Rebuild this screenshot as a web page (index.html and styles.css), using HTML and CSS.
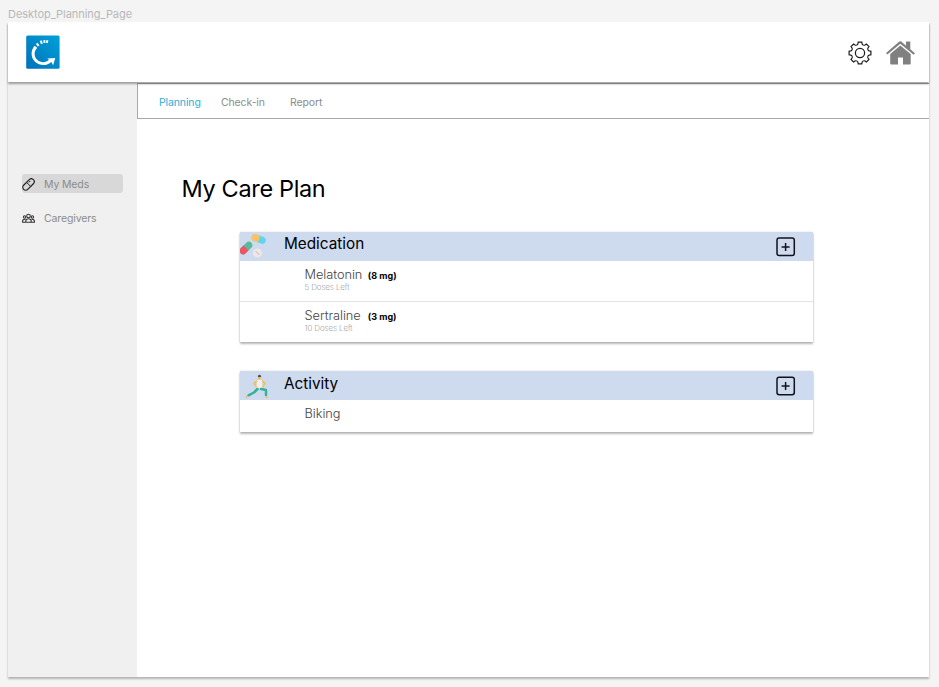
FILE: index.html
```html
<!DOCTYPE html>
<html lang="en">
<head>
<meta charset="utf-8">
<title>My Care Plan</title>
<link rel="stylesheet" href="styles.css">
</head>
<body>
<div class="label">Desktop_Planning_Page</div>
<div class="frame">
  <header class="header">
    <svg class="logo" viewBox="0 0 34 34">
      <defs><linearGradient id="blue" x1="1" y1="0" x2="0" y2="1"><stop offset="0" stop-color="#00a1d9"/><stop offset="1" stop-color="#0071b9"/></linearGradient></defs>
      <rect x=".2" y=".4" width="33.400" height="33.400" rx="1.500" fill="url(#blue)"/>
      <path d="M8.600 10.700C4.300 15.500 4.700 22.800 9.300 27C14 31.300 21.500 30.800 25.300 26.900L27.100 30.200L29.300 22.900L21.200 23.500L23 24.700C20.300 27.800 14.800 28.100 11.500 25.100C7.800 21.700 7.700 16.200 11.200 12.700Z" fill="#fff"/>
      <path d="M10.700 8.300l2 2.700M14.700 5.700l1.200 3.100M18.300 5.100l.2 2.800M21.500 5.300l-.8 2.600" stroke="#fff" stroke-width="2"/>
    </svg>
    <div class="tools">
      <svg class="gear" viewBox="-12 -12 24 24" fill="none" stroke="#1c1c1c" stroke-width="1.200">
        <defs><path id="tooth" d="M-3.290 -7.950Q-2.300 -8.300 -2.100 -9.200L-1.800 -10.900H1.800L2.100 -9.200Q2.300 -8.300 3.290 -7.950"/></defs>
        <use href="#tooth"/><use href="#tooth" transform="rotate(45)"/><use href="#tooth" transform="rotate(90)"/><use href="#tooth" transform="rotate(135)"/><use href="#tooth" transform="rotate(180)"/><use href="#tooth" transform="rotate(225)"/><use href="#tooth" transform="rotate(270)"/><use href="#tooth" transform="rotate(315)"/>
        <circle r="4.600"/>
      </svg>
      <svg class="home" viewBox="0 0 29 24" fill="#808080">
        <path d="M0 12L13.300 .6Q14.300 -.1 15.300 .6L20 4.700V.5H24.300V8.300L29 12.200L27.600 13.700L14.300 2.700L1.400 13.600Z"/>
        <path d="M4.200 13L14.300 4.500L24.700 13V22.600Q24.700 23.500 23.800 23.500H17V16.500H12V23.500H5.100Q4.200 23.500 4.200 22.600Z"/>
      </svg>
    </div>
  </header>
  <div class="body">
    <nav class="side">
      <a class="side-item active">
        <svg viewBox="0 0 13 13" fill="none" stroke="#222" stroke-width="1.200"><rect x="-.4" y="3.600" width="13.800" height="5.800" rx="2.900" transform="rotate(-45 6.500 6.500)"/><path d="M4.600 4.400l4 4M6.800 4.400l1.500-1.500" stroke-width="1"/></svg>
        <span>My Meds</span>
      </a>
      <a class="side-item">
        <svg viewBox="0 0 13 13" fill="none" stroke="#333" stroke-width="1.100"><circle cx="6.500" cy="4" r="1.800"/><circle cx="2.600" cy="5" r="1.200"/><circle cx="10.400" cy="5" r="1.200"/><path d="M3.800 10.300V9.100Q3.900 6.800 6.500 6.800T9.200 9.100V10.300ZM3.800 10.300H.6V9Q.7 7.300 3.400 7.300M9.200 10.300H12.400V9Q12.300 7.300 9.600 7.300"/></svg>
        <span>Caregivers</span>
      </a>
    </nav>
    <main class="main">
      <div class="tabs"><a class="planning">Planning</a><a class="checkin">Check-in</a><a class="report">Report</a></div>
      <h1>My Care Plan</h1>
      <section class="card">
        <div class="card-head">
          <svg class="emblem" viewBox="0 0 29 29">
            <g transform="rotate(-45 6 16)"><rect x="-1.500" y="12.500" width="15" height="7" rx="3.500" fill="#5abb98"/><path d="M6 12.500H2a3.500 3.500 0 0 0 0 7H6Z" fill="#ee5366"/></g>
            <g transform="rotate(20 19 7)"><rect x="11.500" y="3.600" width="14.500" height="7" rx="3.500" fill="#5fd4ec"/><path d="M19 3.600H15a3.500 3.500 0 0 0 0 7H19Z" fill="#ffc162"/></g>
            <circle cx="17.500" cy="21" r="4.500" fill="#f0e6e8"/><path d="M15.500 19l4 4" stroke="#c5b9bf"/>
          </svg>
          <h2>Medication</h2>
          <svg class="add" viewBox="0 0 20 20" fill="none" stroke="#10131c" stroke-width="1.500"><rect x="1" y="1" width="17.300" height="17.600" rx="2.200"/><path d="M9.600 6v8M5.600 10h8"/></svg>
        </div>
        <div class="row"><div class="name">Melatonin<b>(8 mg)</b></div><div class="doses">5 Doses Left</div></div>
        <div class="row"><div class="name sertraline">Sertraline<b>(3 mg)</b></div><div class="doses">10 Doses Left</div></div>
      </section>
      <section class="card activity">
        <div class="card-head">
          <svg class="emblem" viewBox="0 0 29 29" fill="none" stroke-linejoin="round" stroke-linecap="round">
            <path d="M17.500 9.500L14 12.500L17 16.500M21.500 9.500L25 12.500L22 16.500" stroke="#f6bd5b" stroke-width="1.700"/>
            <path d="M17 9H22L22.300 17H16.700Z" fill="#eef0ef"/>
            <circle cx="19.500" cy="6.500" r="1.700" fill="#f3b45a"/><path d="M17.800 5.900Q17.800 3.700 19.500 3.700T21.200 5.900Z" fill="#46505e"/>
            <path d="M17.500 18L14 21.500L8.500 24.300M21 18L26 19L26 24" stroke="#35b298" stroke-width="2.500"/>
            <path d="M7 25L6.500 26.700M26 25.500L27 26.700" stroke="#f3b45a" stroke-width="1.300"/>
          </svg>
          <h2>Activity</h2>
          <svg class="add" viewBox="0 0 20 20" fill="none" stroke="#10131c" stroke-width="1.500"><rect x="1" y="1.200" width="17.300" height="17.600" rx="2.200"/><path d="M9.600 6v8M5.600 10h8"/></svg>
        </div>
        <div class="row"><div class="name">Biking</div></div>
      </section>
    </main>
  </div>
</div>
</body>
</html>
```
FILE: styles.css
```css
* { box-sizing: border-box; }
body { margin: 0; height: 687px; overflow: hidden; background: #f4f4f4; font-family: Inter, "Liberation Sans", sans-serif; }
.label { height: 22px; padding: 6px 0 0 8px; font-size: 11px; line-height: 16px; color: #b8b8b8; letter-spacing: -.04px; }
.frame { width: 921px; height: 655px; margin-left: 8px; background: #fff; box-shadow: 0 2px 2px rgba(0,0,0,.27); display: flex; flex-direction: column; }
.header { position: relative; height: 60px; flex: none; padding: 0 14px 0 18px; display: flex; align-items: center; justify-content: space-between; background: #fff; box-shadow: 0 2px 2px rgba(0,0,0,.35); }
.logo { width: 34px; height: 34px; }
.tools { display: flex; align-items: center; gap: 14px; padding-top: 1px; }
.gear { width: 24px; height: 24px; }
.home { width: 29px; height: 24px; }
.body { flex: 1; display: flex; }
.side { width: 129px; background: #f0f0f0; padding: 92px 14px 0 14px; display: flex; flex-direction: column; gap: 15px; }
.side-item { height: 19px; width: 101px; border-radius: 3px; display: flex; align-items: center; gap: 9px; font-size: 10.500px; letter-spacing: -.13px; color: #8c8c8c; }
.side-item svg { width: 13px; height: 13px; margin-top: 2px; }
.side-item span { padding-top: 2px; }
.side-item.active { background: #d8d8d8; }
.main { flex: 1; }
.tabs { height: 36px; margin-top: 1px; border: 1px solid #a8a8a8; border-right: 0; display: flex; align-items: center; padding: 2px 0 0 21px; font-size: 10.500px; letter-spacing: -.13px; color: #8c8c8c; }
.planning { width: 62px; color: #27aed8; }
.checkin { width: 69px; }
h1 { margin: 54px 0 0 44.500px; font-size: 23.500px; line-height: 32px; font-weight: 400; letter-spacing: -.35px; color: #000; }
.card { width: 573.500px; margin: 26.500px 0 0 102.500px; background: #fff; box-shadow: 0 2px 2px rgba(0,0,0,.27), 0 0 2px rgba(0,0,0,.12); }
.card.activity { margin-top: 29px; }
.card-head { height: 29px; background: #cedaed; display: flex; align-items: flex-start; }
.emblem { width: 29px; height: 29px; }
h2 { margin: 2.500px 0 0 15.500px; font-size: 15.300px; line-height: 20px; font-weight: 400; flex: 1; }
.activity h2 { margin-top: 3px; }
.add { width: 20px; height: 20px; margin: 5px 17.500px 0 0; }
.row { height: 40px; padding: 5.500px 0 0 65px; }
.row + .row { height: 41px; border-top: 1px solid #e4e4e4; }
.activity .row { height: 32px; }
.name { display: flex; align-items: baseline; gap: 5.500px; font-size: 12.800px; line-height: 18px; font-weight: 300; letter-spacing: -.05px; color: #444; }
.name.sertraline { gap: 7.200px; }
.name b { font-size: 9px; font-weight: 700; letter-spacing: 0; color: #000; }
.doses { margin-top: -2px; font-size: 8px; line-height: 8px; font-weight: 200; letter-spacing: -.1px; color: #777; }
```
